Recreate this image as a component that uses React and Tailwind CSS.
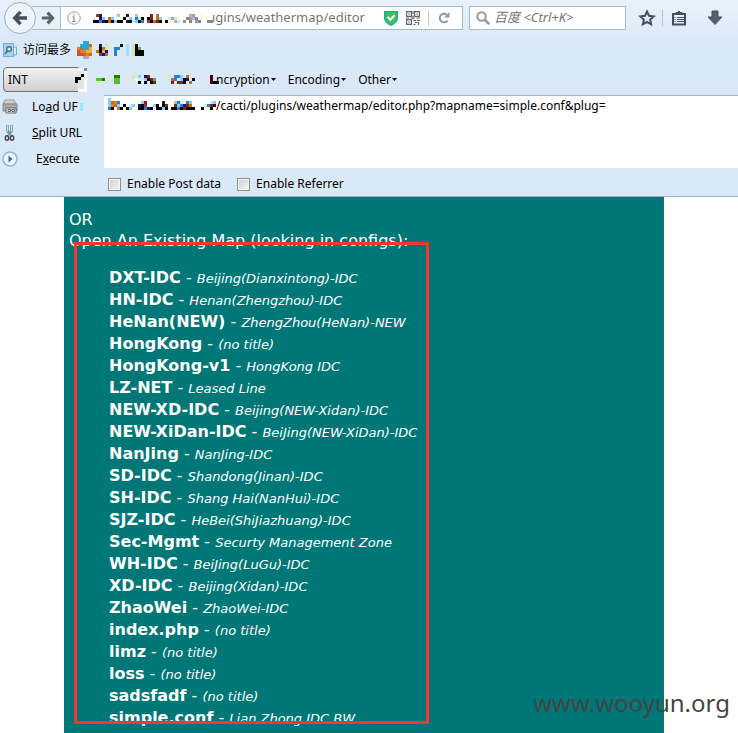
import React from "react";

const COLORS = {
  k: "#000000", n: "#1b1464", N: "#7a2810", r: "#8f3a3a", b: "#88ccff", m: "#2a80d0",
  y: "#ffffbb", o: "#c07018", O: "#f07820", c: "#bbf4ff", g: "#888888", t: "#7a9c98",
  p: "#b89888", v: "#6a3a9c", l: "#d8e4a8", e: "#4cd000", E: "#2a7800", f: "#6aa84f",
  q: "#50001c", w: "#fafafa", h: "#e4e4e4", s: "#a0b8f0", u: "#7088b0", d: "#d05020",
  B: "#20a8e0", P: "#c8a0b0", Y: "#f0b030", L: "#8ee8ff",
};

function Mosaic({ rows, size = 3, className = "" }) {
  const cols = Math.max(...rows.map((r) => r.length));
  return (
    <svg width={cols * size} height={rows.length * size} shapeRendering="crispEdges" aria-hidden="true" className={`block shrink-0 ${className}`}>
      {rows.flatMap((row, y) =>
        [...row].map((c, x) =>
          COLORS[c] ? <rect key={`${x}-${y}`} x={x * size} y={y * size} width={size} height={size} fill={COLORS[c]} /> : null
        )
      )}
    </svg>
  );
}

const maps = [
  ["DXT-IDC", "Beijing(Dianxintong)-IDC"],
  ["HN-IDC", "Henan(Zhengzhou)-IDC"],
  ["HeNan(NEW)", "ZhengZhou(HeNan)-NEW"],
  ["HongKong", "(no title)"],
  ["HongKong-v1", "HongKong IDC"],
  ["LZ-NET", "Leased Line"],
  ["NEW-XD-IDC", "Beijing(NEW-Xidan)-IDC"],
  ["NEW-XiDan-IDC", "BeiJing(NEW-XiDan)-IDC"],
  ["NanJing", "NanJing-IDC"],
  ["SD-IDC", "Shandong(Jinan)-IDC"],
  ["SH-IDC", "Shang Hai(NanHui)-IDC"],
  ["SJZ-IDC", "HeBei(ShiJiazhuang)-IDC"],
  ["Sec-Mgmt", "Securty Management Zone"],
  ["WH-IDC", "BeiJing(LuGu)-IDC"],
  ["XD-IDC", "Beijing(Xidan)-IDC"],
  ["ZhaoWei", "ZhaoWei-IDC"],
  ["index.php", "(no title)"],
  ["limz", "(no title)"],
  ["loss", "(no title)"],
  ["sadsfadf", "(no title)"],
  ["simple.conf", "Lian Zhong IDC BW"],
];

function NavBar() {
  return (
    <div className="flex h-9 items-center bg-linear-to-b from-[#e9f2fb] to-[#dceaf8]">
      <div className="flex w-[61px] shrink-0 items-center pl-1">
        <button aria-label="Back" className="relative z-10 flex size-8 shrink-0 items-center justify-center rounded-full border border-[#9cadbc] bg-[#edf4fb]">
          <svg width="16" height="16" viewBox="0 0 16 16" fill="none" stroke="#454f59" strokeWidth="3.4">
            <path d="M8.5 1.8 2.8 8l5.7 6.2M3 8h12" />
          </svg>
        </button>
        <button aria-label="Forward" className="-ml-1 flex h-6 flex-1 items-center justify-center border-y border-r border-[#a9bac9] bg-[#e6f0f9] pl-1">
          <svg width="14" height="14" viewBox="0 0 16 16" fill="none" stroke="#5a646e" strokeWidth="3.6">
            <path d="M7.5 1.8 13.2 8l-5.7 6.2M13 8H1" />
          </svg>
        </button>
      </div>
      <div className="flex h-6 w-[402px] shrink-0 items-center border-y border-r border-[#a9bac9] bg-white pl-1.5">
        <svg width="14" height="14" viewBox="0 0 14 14" fill="none" stroke="#999" className="shrink-0">
          <circle cx="7" cy="7" r="6.2" />
          <path d="M5.5 6H7v4.3M5.3 10.3h3.6M6.2 3.8h1.6" strokeWidth="1.3" />
        </svg>
        <Mosaic
          className="ml-3"
          rows={[
            ".rn.....b.yn..bwy..N.o..........sp..y....",
            "..nb.ob..ykyb.mck.kN.ob..cpcy..gpsu.y....",
            "kkmnkokbkk.nkcbkm.rkoNk.ky.Pc.t.g.pu..gg.",
          ]}
        />
        <input aria-label="Address" readOnly value="ıgins/weathermap/editor" className="-ml-1 w-[156px] shrink-0 bg-transparent text-[13px] text-[#777] outline-none" />
        <div className="ml-4 flex flex-1 items-center">
          <svg width="14" height="16" viewBox="0 0 14 16">
            <path d="M0 1h14v7c0 4-4 6.5-7 8-3-1.5-7-4-7-8z" fill="#28a4a4" />
            <path d="M1.5 2.2h11V8c0 3.200-3 5.200-5.500 6.500C4.500 13.200 1.500 11.200 1.500 8z" fill="#3fc250" />
            <path d="m3.7 7 2.6 2.700 4.300-4.500" fill="none" stroke="#fff" strokeWidth="2" />
          </svg>
          <svg width="14" height="14" viewBox="0 0 14 14" fill="none" stroke="#5f6670" strokeWidth="1.2" className="ml-2">
            <path d="M.6.6h4.8v4.8H.6zM8.6.6h4.8v4.8H8.6zM.6 8.6h4.8v4.8H.6zM2.2 3h1.6M10.2 3h1.6M2.2 11h1.6M7 0v3M7 4.5V8M0 7h3M4.5 7H9M10.5 7H14M7.5 9.500H10M11 9.500h3M9 11.500h2.500M7.500 13.400h2M12.500 11v3" />
          </svg>
          <span className="ml-2 h-4 w-px bg-[#ccc]" />
          <svg width="14" height="14" viewBox="0 0 14 14" fill="none" className="ml-2">
            <path d="M10.5 9.6A4.3 4.3 0 1 1 9.6 3.600" stroke="#8d99a6" strokeWidth="2" />
            <path d="M12.5 1v5.500H7z" fill="#8d99a6" />
          </svg>
        </div>
      </div>
      <label className="ml-1.5 flex h-6 w-[157px] shrink-0 items-center gap-1 border border-[#a9bac9] bg-white pl-1.5">
        <svg width="14" height="14" viewBox="0 0 14 14" fill="none" stroke="#999" strokeWidth="2">
          <circle cx="5.5" cy="5.5" r="4.2" />
          <path d="m8.5 8.5 4.8 4.8" strokeWidth="2.5" />
        </svg>
        <input aria-label="Search" placeholder="百度 <Ctrl+K>" className="w-28 bg-transparent text-[13px] italic outline-none placeholder:text-[#757575]" />
      </label>
      <div className="flex items-center pl-3">
        <button aria-label="Bookmark this page">
          <svg width="18" height="18" viewBox="0 0 18 18" fill="none" stroke="#454f59" strokeWidth="2" className="block">
            <path d="m9 2.5 2 4.300 4.700.6-3.500 3.200.9 4.700L9 13l-4.100 2.300.9-4.700L2.300 7.400 7 6.800z" />
          </svg>
        </button>
        <span className="ml-1.5 h-4 w-px bg-[#b5c3d0]" />
        <button aria-label="Bookmarks" className="ml-2">
          <svg width="16" height="16" viewBox="0 0 16 16" fill="none" stroke="#454f59" className="block">
            <path d="M2 4h12v10.500H2z" strokeWidth="2" />
            <path d="M5 4V2.500h1.500L8 1l1.500 1.500H11V4z" fill="#454f59" />
            <path d="M3.500 7.500h1M6 7.500h7M3.500 9.500h1M6 9.500h7M3.500 11.500h1M6 11.500h7" />
          </svg>
        </button>
        <button aria-label="Downloads" className="ml-5">
          <svg width="16" height="16" viewBox="0 0 16 16" className="block">
            <path d="M5 1h6v6h4l-7 7.500L1 7h4z" fill="#58626d" stroke="#454f59" />
          </svg>
        </button>
      </div>
    </div>
  );
}

function BookmarksBar() {
  return (
    <div className="flex h-7 items-center pl-[3px]">
      <a href="#most" className="flex items-center gap-1.5 text-xs text-black">
        <svg width="14" height="16" viewBox="0 0 14 16">
          <path d="M0 1h11v14H0z" fill="#72acd0" />
          <path d="M1 2h9v12H1z" fill="#a7d2ea" />
          <path d="M11 5h2.500v8H11" fill="none" stroke="#72acd0" />
          <circle cx="6" cy="7" r="2.300" fill="#d9edf8" stroke="#3c6c92" strokeWidth="1.4" />
          <path d="m4.500 9-2.500 3" stroke="#3c6c92" strokeWidth="1.6" />
        </svg>
        访问最多
      </a>
      <Mosaic className="ml-1.5" rows={["..BB.", ".BBBo", "OoBuY", "dOOYY", "ddoOo", "..PP."]} />
      <Mosaic className="ml-1" rows={[".n.l", ".kol", "okYn", ".vno"]} />
      <Mosaic className="ml-1.5" rows={["..k", "mm.", "m..", "m.."]} />
      <Mosaic className="ml-[3px]" rows={["L.lk..", "L.lkf.", "L.lkkk", "L.lkkk"]} />
    </div>
  );
}

function MenuButton({ children }) {
  return (
    <button className="flex items-center text-xs whitespace-nowrap">
      {children}
      <svg width="5" height="3" viewBox="0 0 5 3" className="ml-px"><path d="M0 0h5L2.500 3z" /></svg>
    </button>
  );
}

function HackBar() {
  return (
    <>
      <div className="flex h-[31px] items-center pl-[3px]">
        <select aria-label="Type" className="h-[25px] w-[78px] shrink-0 appearance-none rounded-sm border border-[#707070] bg-linear-to-b from-[#f2f2f2] to-[#cfcfcf] px-1 text-xs">
          <option>INT</option>
        </select>
        <Mosaic className="-ml-1.5" rows={[".wwg", ".hhw", ".hkw", "kkhw", "khhw", ".hhw", ".hhw", ".www"]} />
        <div className="flex items-center pl-[9px]">
          <Mosaic rows={["eeE"]} />
          <Mosaic className="ml-[9px]" rows={["EE", "ee", "ff"]} />
          <Mosaic className="ml-3" rows={["l.b.nN..", ".yc.bkNg", "..k.k.kN"]} />
          <Mosaic className="ml-[15px]" rows={[".mmb.o..", "om.bkn.k", "N.NNk.o."]} />
          <Mosaic className="ml-[15px]" rows={["q..", "q..", "qkk"]} />
        </div>
        <div className="-ml-[3px] flex gap-3">
          <MenuButton>ncryption</MenuButton>
          <MenuButton>Encoding</MenuButton>
          <MenuButton>Other</MenuButton>
        </div>
      </div>
      <div className="flex border-b border-[#9fb0c4]">
        <div className="w-[104px] shrink-0 text-xs">
          <button className="flex h-6 w-full items-center pl-0.5">
            <svg width="16" height="16" viewBox="0 0 16 16">
              <path d="M3 1h9l2 4H1z" fill="#d2d2d2" stroke="#999" />
              <path d="M1 5h14v7H1z" fill="#aaa" stroke="#888" />
              <path d="M4 9h10v5H4z" fill="#eee" stroke="#666" />
              <path d="M6 10.500h2.500v2H6zM10 10.500h2.500v2H10zM8 11.500h2" fill="none" stroke="#666" />
            </svg>
            <span className="ml-3.5">Lo<u>a</u>d UF</span>
            <span className="ml-0.5 h-2 w-[3px] bg-[#99e8ff]" />
          </button>
          <button className="flex h-7 w-full items-center pl-0.5">
            <svg width="16" height="18" viewBox="0 0 16 18" fill="none">
              <path d="M5.500 1v6l3 4M9.500 1v6l-3 4" stroke="#6f98a5" strokeWidth="2.6" />
              <path d="M5.500 1.500v6M9.500 1.500v6" stroke="#c7e2e9" />
              <ellipse cx="5" cy="14" rx="1.700" ry="2.300" stroke="#444" strokeWidth="1.4" />
              <ellipse cx="10" cy="14" rx="1.700" ry="2.300" stroke="#444" strokeWidth="1.4" />
            </svg>
            <span className="ml-3.5"><u>S</u>plit URL</span>
          </button>
          <button className="flex h-6 w-full items-center pl-0.5">
            <svg width="16" height="16" viewBox="0 0 16 16">
              <circle cx="8" cy="8" r="7" fill="#edf5fd" stroke="#8fb3dd" strokeWidth="1.5" />
              <path d="M6.500 4.500 10.500 8l-4 3.500z" fill="#2a6cc0" />
            </svg>
            <span className="ml-[18px]">E<u>x</u>ecute</span>
          </button>
        </div>
        <div className="min-w-0 flex-1">
          <div className="flex h-[73px] items-start border-t border-[#a8b0b8] bg-white pt-0.5">
            <Mosaic
              className="ml-1"
              rows={["b...................................", "boOm.....y.bN.....n...bmc.mb......cb", "bOob.k.cb.nkr..bk.kN.yNbmnNo....cmNq", "mk.okykby.kkmnk.kkbk.kkmkNkkk..k.yk."]}
            />
            <textarea aria-label="URL" readOnly value="/cacti/plugins/weathermap/editor.php?mapname=simple.conf&plug=" className="h-16 min-w-0 flex-1 resize-none bg-transparent text-xs outline-none" />
          </div>
          <div className="flex h-7 items-center gap-4 pt-1 pl-1 text-xs">
            {["Enable Post data", "Enable Referrer"].map((t) => (
              <label key={t} className="flex items-center gap-1.5">
                <input type="checkbox" className="size-[13px] appearance-none border border-[#8e8f8f] bg-linear-to-br from-[#cbcfd5] to-[#f6f6f6] shadow-[inset_0_0_0_1px_#f4f4f4]" />
                {t}
              </label>
            ))}
          </div>
        </div>
      </div>
    </>
  );
}

export default function App() {
  return (
    <div className="relative flex h-screen flex-col overflow-hidden bg-white">
      <header className="shrink-0 bg-[#dae9f8] font-['Noto_Sans','Noto_Sans_CJK_SC',sans-serif] text-black">
        <NavBar />
        <BookmarksBar />
        <HackBar />
      </header>
      <main className="relative mx-16 w-[600px] max-w-full flex-1 overflow-hidden bg-[#007777] px-[5px] pt-3 font-['Verdana','DejaVu_Sans',sans-serif] text-base text-white">
        <p className="leading-[21px]">OR</p>
        <p className="leading-[21px]">Open An Existing Map (looking in configs):</p>
        <ul className="mt-4 pl-10">
          {maps.map(([name, title]) => (
            <li key={name} className="h-[22px] leading-[22px] whitespace-nowrap">
              <a href={`#${name}`} className="font-bold">{name}</a> - <em className="text-[13px]">{title}</em>
            </li>
          ))}
        </ul>
        <div className="absolute top-[45px] left-[10px] h-[482px] w-[355px] border-3 border-[#ff3333]" />
      </main>
      <div className="absolute right-2 bottom-3 font-['Noto_Sans',sans-serif] text-2xl leading-9 text-[#444]">www.wooyun.org</div>
    </div>
  );
}
